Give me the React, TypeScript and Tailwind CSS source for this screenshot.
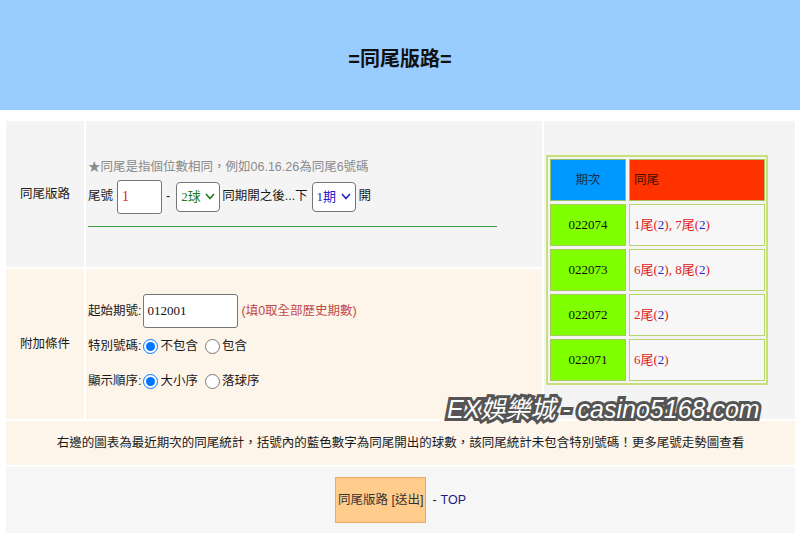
import { useState } from 'react';

const font = "font-['Liberation_Sans','Noto_Sans_CJK_TC',sans-serif]";

const rows = [
  { period: '022074', tails: [['1', '2'], ['7', '2']] },
  { period: '022073', tails: [['6', '2'], ['8', '2']] },
  { period: '022072', tails: [['2', '2']] },
  { period: '022071', tails: [['6', '2']] },
];

const FakeSelect = ({ label, color }: { label: string; color: string }) => (
  <div
    className={`flex h-[30px] w-[44px] items-center justify-between rounded-[4px] border border-[#767676] bg-white pl-[4px] pr-[4px] ${color}`}
  >
    <span className="font-['Liberation_Serif','Noto_Sans_CJK_TC',serif] text-[13px]">{label}</span>
    <svg width="10" height="7" viewBox="0 0 10 7" fill="none" stroke="currentColor" strokeWidth="1.6">
      <polyline points="1,1 5,5.5 9,1" />
    </svg>
  </div>
);

const Radio = ({ name, checked, label, onChange }: { name: string; checked: boolean; label: string; onChange: () => void }) => (
  <label className="flex items-center">
    <input
      type="radio"
      name={name}
      checked={checked}
      onChange={onChange}
      className="mx-[2px] h-[15px] w-[15px] accent-[#0075ff]"
    />
    <span>{label}</span>
  </label>
);

export default function App() {
  const [special, setSpecial] = useState<'no' | 'yes'>('no');
  const [order, setOrder] = useState<'size' | 'drop'>('size');

  return (
    <div className={`relative min-h-[533px] bg-white text-[12.5px] text-[#1a1a1a] ${font}`}>
      {/* Header */}
      <header className="flex h-[110px] items-center justify-center bg-[#99ccff] pt-[7px]">
        <h1 className="text-[20px] font-bold text-[#111]">=同尾版路=</h1>
      </header>

      {/* Main table */}
      <div className="mx-[6px] mt-[11px] grid grid-cols-[78px_456px_251px] grid-rows-[146px_150px_44px_70px] gap-[2px]">
        <div className="flex items-center justify-center bg-[#f4f4f4]">同尾版路</div>

        <div className="flex flex-col justify-center bg-[#f4f4f4] pb-[4px] pl-[2px]">
          <div className="h-[20px] leading-[20px] text-[#8a8a8a]">★同尾是指個位數相同，例如06.16.26為同尾6號碼</div>
          <div className="mt-[3px] flex h-[34px] items-center">
            <span>尾號</span>
            <input
              defaultValue="1"
              className="ml-[4px] h-[34px] w-[45px] rounded-[3px] border border-[#767676] bg-white px-[4px] font-['Liberation_Serif',serif] text-[14px] text-[#e02020] outline-none"
            />
            <span className="ml-[4px] mr-[6px]">-</span>
            <FakeSelect label="2球" color="text-[#1f7a1f]" />
            <span className="ml-[2px]">同期開之後...下</span>
            <div className="ml-[4px]">
              <FakeSelect label="1期" color="text-[#2323c8]" />
            </div>
            <span className="ml-[3px]">開</span>
          </div>
          <div className="mt-[12px] h-[1.5px] w-[90%] bg-[#3f9f3f]" />
        </div>

        {/* Result table */}
        <div className="row-span-2 flex items-center bg-[#f4f4f4] pl-[2px]">
          <div className="w-[222px] border-2 border-[#c8e07a] p-[2px]">
            <div className="grid grid-cols-[76px_136px] gap-[3px]">
              <div className="flex h-[42px] items-center justify-center border border-[#8fbf6a] bg-[#0099ff] text-[#1c2c4c]">期次</div>
              <div className="flex h-[42px] items-center border border-[#a8c060] bg-[#ff3300] pl-[4px] text-[#3a1200]">同尾</div>
              {rows.map((r) => (
                <div key={r.period} className="contents">
                  <div className="flex h-[42px] items-center justify-center border border-[#a8c860] bg-[#80ff00] font-['Liberation_Serif',serif] text-[13px] text-[#111]">
                    {r.period}
                  </div>
                  <div className="flex h-[42px] items-center border border-[#b8d46c] bg-[#f7f7f7] pl-[4px] font-['Liberation_Serif','Noto_Sans_CJK_TC',serif] text-[13px] text-[#e02020]">
                    {r.tails.map(([t, n], i) => (
                      <span key={i}>
                        {i > 0 && ', '}
                        {t}尾(<span className="text-[#1a2ad0]">{n}</span>)
                      </span>
                    ))}
                  </div>
                </div>
              ))}
            </div>
          </div>
        </div>

        <div className="flex items-center justify-center bg-[#fdf4ea]">附加條件</div>

        <div className="flex flex-col justify-center bg-[#fdf4ea] pl-[2px] pt-[4px]">
          <div className="flex h-[35px] items-center">
            <span>起始期號:</span>
            <input
              defaultValue="012001"
              className="ml-[2px] h-[34px] w-[95px] rounded-[3px] border border-[#767676] bg-white px-[3px] font-['Liberation_Serif',serif] text-[13px] text-[#111] outline-none"
            />
            <span className="ml-[3px] text-[#c04a4a]">(填0取全部歷史期數)</span>
          </div>
          <div className="flex h-[35px] items-center">
            <span>特別號碼:</span>
            <Radio name="special" label="不包含" checked={special === 'no'} onChange={() => setSpecial('no')} />
            <span className="w-[5px]" />
            <Radio name="special" label="包含" checked={special === 'yes'} onChange={() => setSpecial('yes')} />
          </div>
          <div className="flex h-[35px] items-center">
            <span>顯示順序:</span>
            <Radio name="order" label="大小序" checked={order === 'size'} onChange={() => setOrder('size')} />
            <span className="w-[5px]" />
            <Radio name="order" label="落球序" checked={order === 'drop'} onChange={() => setOrder('drop')} />
          </div>
        </div>

        <div className="col-span-3 flex items-center justify-center bg-[#fdf4ea]">
          右邊的圖表為最近期次的同尾統計，括號內的藍色數字為同尾開出的球數，該同尾統計未包含特別號碼！更多尾號走勢圖查看
        </div>

        <div className="col-span-3 flex items-start justify-center bg-[#f6f6f6] pt-[10px]">
          <button className="h-[46px] border border-[#e6ad6a] bg-[#ffcc8c] px-[2px] text-[#333]">同尾版路 [送出]</button>
          <span className="ml-[6px] mt-[14px]">-</span>
          <a href="#top" className="ml-[4px] mt-[14px] text-[#1b1b8a]">TOP</a>
        </div>
      </div>

      {/* Watermark */}
      <div className="pointer-events-none absolute left-[447px] top-[392px] font-['Liberation_Sans','Noto_Sans_CJK_TC',sans-serif] text-[25px] italic leading-[34px] text-white [-webkit-text-stroke:6px_#555] [paint-order:stroke_fill]">
        EX娛樂城 - casino5168.com
      </div>
    </div>
  );
}
